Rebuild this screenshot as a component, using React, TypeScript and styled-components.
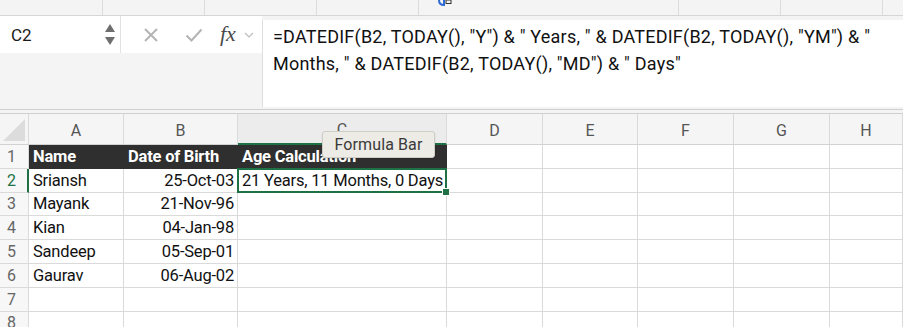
import React from "react";
import styled, { createGlobalStyle } from "styled-components";

const Global = createGlobalStyle`
  html, body { margin: 0; padding: 0; background: #ffffff; }
  body { font-family: Roboto, "Noto Sans", sans-serif; overflow: hidden; }
  * { box-sizing: border-box; }
`;

const Page = styled.div`
  width: 903px;
  height: 327px;
  display: flex;
  flex-direction: column;
  overflow: hidden;
  position: relative;
`;

const TopStrip = styled.div`
  height: 16px;
  flex: none;
  display: flex;
  background: #f4f4f4;
  border-bottom: 1px solid #d6d6d6;
`;

const Segment = styled.div<{ $w: number }>`
  width: ${(p) => p.$w}px;
  flex: none;
  height: 100%;
  border-right: 1px solid #dcdcdc;
  position: relative;
`;

const FormulaArea = styled.div`
  height: 94px;
  flex: none;
  display: flex;
  background: #f4f4f4;
  border-bottom: 1px solid #cfcfcf;
`;

const LeftPart = styled.div`
  width: 262px;
  flex: none;
  display: flex;
  flex-direction: column;
`;

const TopRow = styled.div`
  height: 37px;
  display: flex;
  align-items: center;
  background: #ffffff;
`;

const NameBox = styled.div`
  width: 121px;
  height: 100%;
  display: flex;
  align-items: center;
  justify-content: space-between;
  padding: 0 5px 0 11px;
  border-right: 1px solid #e2e2e2;
  font-size: 17px;
  color: #1a1a1a;
`;

const Spinner = styled.div`
  display: flex;
  flex-direction: column;
  gap: 5px;
  align-items: center;
`;

const Tri = styled.div<{ $up?: boolean }>`
  width: 0;
  height: 0;
  border-left: 5px solid transparent;
  border-right: 5px solid transparent;
  ${(p) => (p.$up ? "border-bottom: 8px solid #6e6e6e;" : "border-top: 8px solid #6e6e6e;")}
`;

const Icons = styled.div`
  flex: 1;
  height: 100%;
  display: flex;
  align-items: center;
  padding-left: 22px;
`;

const IconSlot = styled.div<{ $w: number }>`
  width: ${(p) => p.$w}px;
  flex: none;
  display: flex;
  align-items: center;
`;

const Fx = styled.span`
  font-family: "Liberation Serif", "DejaVu Serif", serif;
  font-style: italic;
  font-size: 22px;
  color: #4a4a4a;
  line-height: 1;
  margin-top: -2px;
`;

const FormulaBox = styled.div`
  flex: 1;
  margin-top: 4px;
  margin-bottom: 2px;
  background: #ffffff;
  border-left: 1px solid #dedede;
  padding: 3px 0 0 10px;
  font-size: 18px;
  line-height: 27px;
  color: #111111;
  letter-spacing: 0.22px;
  white-space: pre;
`;

const Spacer = styled.div`
  height: 4px;
  flex: none;
  background: #f4f4f4;
  border-bottom: 1px solid #cfcfcf;
`;

const Grid = styled.div`
  display: grid;
  grid-template-columns: 29px 95px 114px 209px 96px 95px 96px 96px 73px;
  grid-template-rows: 31px repeat(8, 23.8px);
`;

const ColHead = styled.div<{ $sel?: boolean }>`
  background: ${(p) => (p.$sel ? "#ececec" : "#f5f5f5")};
  border-right: 1px solid #dadada;
  border-bottom: ${(p) => (p.$sel ? "2px solid #1e7145" : "1px solid #d2d2d2")};
  display: flex;
  align-items: center;
  justify-content: center;
  font-size: 16px;
  color: #555555;
  padding-top: 2px;
`;

const Corner = styled.div`
  background: #f5f5f5;
  border-right: 1px solid #dadada;
  border-bottom: 1px solid #d2d2d2;
  display: flex;
  align-items: flex-end;
  justify-content: flex-end;
  padding: 0 3px 3px 0;
`;

const CornerTri = styled.div`
  width: 0;
  height: 0;
  border-left: 22px solid transparent;
  border-bottom: 22px solid #dcdcdc;
`;

const RowHead = styled.div<{ $sel?: boolean }>`
  background: #f7f7f7;
  border-right: ${(p) => (p.$sel ? "2px solid #1e7145" : "1px solid #dadada")};
  border-bottom: 1px solid #dadada;
  display: flex;
  align-items: center;
  padding-left: 7px;
  font-size: 16px;
  color: ${(p) => (p.$sel ? "#1e7145" : "#666666")};
`;

const Cell = styled.div<{ $dark?: boolean; $right?: boolean }>`
  background: ${(p) => (p.$dark ? "#2f2f2f" : "#ffffff")};
  border-right: 1px solid ${(p) => (p.$dark ? "#2f2f2f" : "#dadada")};
  border-bottom: 1px solid ${(p) => (p.$dark ? "#2f2f2f" : "#dadada")};
  display: flex;
  align-items: center;
  justify-content: ${(p) => (p.$right ? "flex-end" : "flex-start")};
  padding: 0 3px 0 4px;
  font-size: 16.5px;
  color: ${(p) => (p.$dark ? "#ffffff" : "#111111")};
  font-weight: ${(p) => (p.$dark ? 700 : 400)};
  white-space: nowrap;
  overflow: visible;
  position: relative;
  letter-spacing: -0.2px;
`;

const Selected = styled.div`
  position: absolute;
  left: -1px;
  top: -1px;
  right: -1px;
  bottom: -1px;
  border: 2px solid #1e7145;
  pointer-events: none;
  z-index: 2;
`;

const Handle = styled.div`
  position: absolute;
  right: -5px;
  bottom: -5px;
  width: 8px;
  height: 8px;
  background: #1e7145;
  border: 1px solid #ffffff;
`;

const Tooltip = styled.div`
  position: absolute;
  left: 322px;
  top: 131px;
  width: 113px;
  height: 27px;
  background: #ecebe6;
  border: 1px solid #cfcdc6;
  border-radius: 3px;
  font-size: 16px;
  color: #3a3a3a;
  display: flex;
  align-items: center;
  justify-content: center;
  box-shadow: 0 1px 2px rgba(0, 0, 0, 0.12);
  letter-spacing: 0.1px;
  z-index: 3;
`;

const cols = ["A", "B", "C", "D", "E", "F", "G", "H"];
const data: [string, string][] = [
  ["Sriansh", "25-Oct-03"],
  ["Mayank", "21-Nov-96"],
  ["Kian", "04-Jan-98"],
  ["Sandeep", "05-Sep-01"],
  ["Gaurav", "06-Aug-02"],
];

const XIcon = () => (
  <svg width="16" height="16" viewBox="0 0 16 16">
    <path d="M2 2 L14 14 M14 2 L2 14" stroke="#b4b4b4" strokeWidth="2" fill="none" />
  </svg>
);

const CheckIcon = () => (
  <svg width="18" height="16" viewBox="0 0 18 16">
    <path d="M1.5 8.5 L6.5 13.5 L16.5 2.5" stroke="#b4b4b4" strokeWidth="2" fill="none" />
  </svg>
);

const Chevron = () => (
  <svg width="10" height="8" viewBox="0 0 10 8">
    <path d="M1 2 L5 6 L9 2" stroke="#bdbdbd" strokeWidth="1.2" fill="none" />
  </svg>
);

const BlueIcon = () => (
  <svg width="20" height="8" viewBox="0 0 20 8" style={{ position: "absolute", left: 18, top: 0 }}>
    <path d="M2 0 Q2 5 7 5 L7 0" stroke="#2d6ad3" strokeWidth="2" fill="none" />
    <rect x="9" y="0" width="5" height="3.5" stroke="#333" strokeWidth="1" fill="none" />
  </svg>
);

export default function App() {
  const rows: React.ReactNode[] = [];
  for (let r = 1; r <= 8; r++) {
    rows.push(
      <RowHead key={`rh${r}`} $sel={r === 2}>
        {r}
      </RowHead>
    );
    for (let c = 0; c < 8; c++) {
      let content: React.ReactNode = null;
      let dark = false;
      let right = false;
      if (r === 1 && c < 3) {
        dark = true;
        content = ["Name", "Date of Birth", "Age Calculation"][c];
      } else if (r >= 2 && r <= 6) {
        const d = data[r - 2];
        if (c === 0) content = d[0];
        if (c === 1) {
          content = d[1];
          right = true;
        }
        if (c === 2 && r === 2) content = "21 Years, 11 Months, 0 Days";
      }
      rows.push(
        <Cell key={`c${r}-${c}`} $dark={dark} $right={right}>
          {content}
          {r === 2 && c === 2 && (
            <Selected>
              <Handle />
            </Selected>
          )}
        </Cell>
      );
    }
  }

  return (
    <Page>
      <Global />
      <TopStrip>
        <Segment $w={103} />
        <Segment $w={102} />
        <Segment $w={112} />
        <Segment $w={102} />
        <Segment $w={260}>
          <BlueIcon />
        </Segment>
        <Segment $w={102} />
        <Segment $w={102} />
      </TopStrip>
      <FormulaArea>
        <LeftPart>
          <TopRow>
            <NameBox>
              <span>C2</span>
              <Spinner>
                <Tri $up />
                <Tri />
              </Spinner>
            </NameBox>
            <Icons>
              <IconSlot $w={42}>
                <XIcon />
              </IconSlot>
              <IconSlot $w={35}>
                <CheckIcon />
              </IconSlot>
              <IconSlot $w={24}>
                <Fx>fx</Fx>
              </IconSlot>
              <IconSlot $w={10}>
                <Chevron />
              </IconSlot>
            </Icons>
          </TopRow>
        </LeftPart>
        <FormulaBox>
          {`=DATEDIF(B2, TODAY(), "Y") & " Years, " & DATEDIF(B2, TODAY(), "YM") & "\nMonths, " & DATEDIF(B2, TODAY(), "MD") & " Days"`}
        </FormulaBox>
      </FormulaArea>
      <Spacer />
      <Grid>
        <Corner>
          <CornerTri />
        </Corner>
        {cols.map((c) => (
          <ColHead key={c} $sel={c === "C"}>
            {c}
          </ColHead>
        ))}
        {rows}
      </Grid>
      <Tooltip>Formula Bar</Tooltip>
    </Page>
  );
}
